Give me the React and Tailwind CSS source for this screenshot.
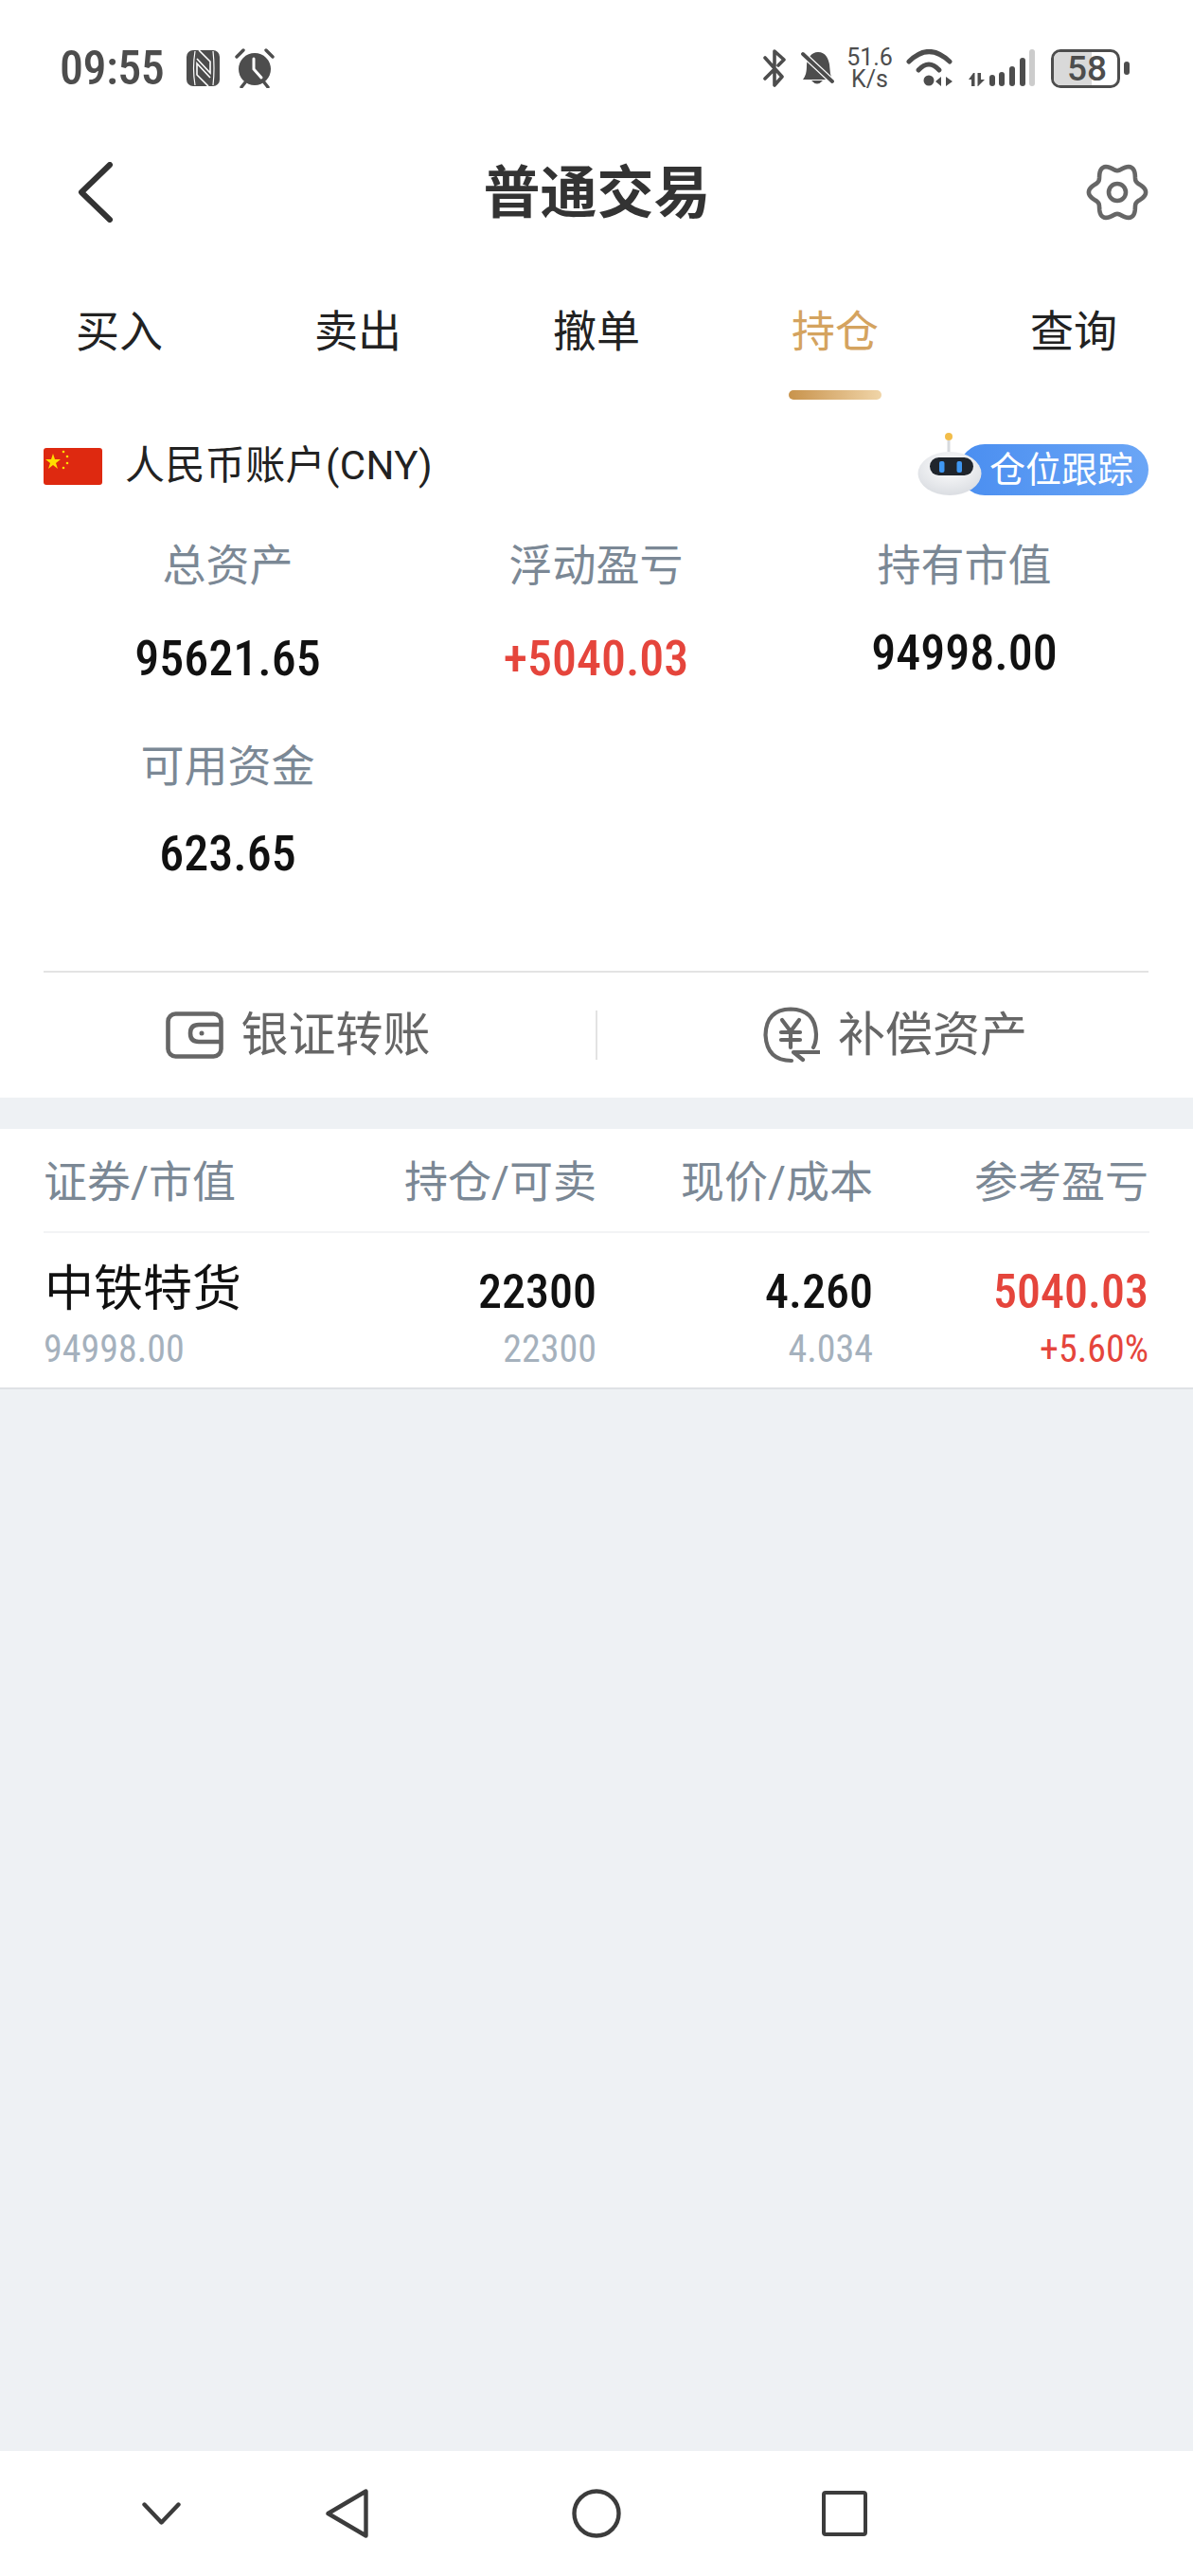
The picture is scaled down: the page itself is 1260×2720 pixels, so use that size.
import React from 'react';

const gearPath = () => {
  const pts = [];
  for (let i = 0; i < 120; i++) {
    const t = (i / 120) * Math.PI * 2;
    const r = 26.5 + 3.6 * Math.cos(6 * t);
    pts.push(`${(31 + r * Math.cos(t)).toFixed(2)} ${(31 + r * Math.sin(t)).toFixed(2)}`);
  }
  return 'M' + pts.join('L') + 'Z';
};

const tabs = ['买入', '卖出', '撤单', '持仓', '查询'];

const StatusBar = () => (
  <div className="h-[144px] flex items-center pl-[63px] pr-[67px] text-[#4d4d4d]">
    <span className="text-[50px] font-medium leading-none w-[122px] tracking-[-0.5px] [font-stretch:86%]">09:55</span>
    {/* nfc */}
    <svg width="35" height="38" viewBox="0 0 35 38" className="ml-[12px]">
      <rect width="35" height="38" rx="7" fill="#4d4d4d" />
      <path d="M9 1Q6 19 9 37M28 1Q30 19 28 37" stroke="#fff" strokeWidth="1.2" fill="none" />
      <path d="M11 9L25 24V12L13 0M25 29L11 14V26L23 38" stroke="#fff" strokeWidth="1.6" fill="none" />
    </svg>
    {/* alarm */}
    <svg width="42" height="42" viewBox="0 0 42 42" className="ml-[16px]">
      <circle cx="21" cy="22" r="17" fill="#4d4d4d" />
      <path d="M20 11V22L28 31" stroke="#fff" strokeWidth="3" fill="none" strokeLinecap="round" />
      <path d="M2 9L9 2M40 9L33 2M7 41L11 36M35 41L31 36" stroke="#4d4d4d" strokeWidth="3.4" strokeLinecap="round" />
    </svg>
    <div className="flex-1" />
    {/* bluetooth off */}
    <svg width="25" height="40" viewBox="0 0 25 40" fill="none" stroke="#4d4d4d" strokeWidth="3.6" strokeLinecap="round" strokeLinejoin="round">
      <path d="M2 9L20 29L12 38V22M12 18V2L22 11L16 17M2 31L11 22" />
    </svg>
    {/* bell off */}
    <svg width="35" height="36" viewBox="0 0 35 36" className="ml-[15px]">
      <path d="M18 1C26 1 29 8 30 14L31 24L33 30H2C5 26 6 22 6 15C6 8 11 1 18 1Z" fill="#4d4d4d" />
      <path d="M1 2L34 33" stroke="#fff" strokeWidth="6.5" />
      <path d="M2 3L33 32" stroke="#4d4d4d" strokeWidth="3.8" strokeLinecap="round" />
      <path d="M11 31Q17 38 23 31Z" fill="#4d4d4d" />
    </svg>
    <div className="ml-[13px] w-[49px] flex flex-col items-center text-[25px] leading-[23px] text-[#4d4d4d]">
      <span>51.6</span>
      <span>K/s</span>
    </div>
    {/* wifi */}
    <svg width="50" height="40" viewBox="0 0 50 40" className="ml-[14px]" fill="none" stroke="#4d4d4d" strokeWidth="5" strokeLinecap="round">
      <path d="M3 13Q24 -8 46 13" />
      <path d="M13 22Q24 10 35 22" />
      <circle cx="24" cy="33" r="5.500" fill="#4d4d4d" stroke="none" />
      <path d="M37 29V39L31 34ZM42 29V39L49 34Z" fill="#4d4d4d" stroke="none" />
    </svg>
    {/* signal */}
    <svg width="70" height="40" viewBox="0 0 70 40" className="ml-[16px]">
      <path d="M5 25L0 32H3V39H6.500V25ZM10 39L17 32H13V25H9.500V39Z" fill="#4d4d4d" />
      <rect x="22" y="27" width="6" height="12" rx="3" fill="#4d4d4d" />
      <rect x="32" y="24" width="6" height="15" rx="3" fill="#4d4d4d" />
      <rect x="43" y="18" width="6" height="21" rx="3" fill="#4d4d4d" />
      <rect x="54" y="9" width="6" height="30" rx="3" fill="#4d4d4d" />
      <rect x="64" y="0" width="6" height="39" rx="3" fill="#cccccc" />
    </svg>
    {/* battery */}
    <div className="ml-[17px] flex items-center">
      <div className="relative w-[73px] h-[41px] rounded-[10px] border-[3px] border-[#4d4d4d] overflow-hidden flex items-center">
        <div className="absolute left-0 top-0 bottom-0 w-[40px] bg-[#d9d9d9]" />
        <span className="relative ml-[14px] text-[37px] leading-none font-medium [font-stretch:90%]">58</span>
      </div>
      <div className="ml-[4px] w-[6px] h-[14px] rounded-full bg-[#4d4d4d]" />
    </div>
  </div>
);

const Header = () => (
  <div className="h-[118px] flex items-center justify-between pl-[82px] pr-[47px]">
    <svg width="38" height="64" viewBox="0 0 38 64" fill="none" stroke="#333" strokeWidth="6" strokeLinecap="round" strokeLinejoin="round">
      <path d="M34 3L4 32L34 61" />
    </svg>
    <h1 className="text-[60px] font-bold text-[#333] leading-none -ml-[6px] pt-[3px]">普通交易</h1>
    <svg width="66" height="62" viewBox="0 0 62 62" fill="none" stroke="#666" strokeWidth="4.6">
      <path d={gearPath()} />
      <circle cx="31" cy="31" r="9" />
    </svg>
  </div>
);

const Tabs = () => (
  <div className="grid grid-cols-5 h-[164px] pt-[56px]">
    {tabs.map((t, i) => (
      <div key={t} className="flex flex-col items-center">
        <span className={`text-[46px] leading-[64px] ${i === 3 ? 'text-[#d4a35f]' : 'text-[#222]'}`}>{t}</span>
        {i === 3 && <div className="mt-[30px] w-[98px] h-[10px] rounded-full bg-gradient-to-r from-[#c8934b] to-[#f0d5a8]" />}
      </div>
    ))}
  </div>
);

const Robot = () => (
  <svg width="76" height="70" viewBox="0 0 76 70" className="relative -mr-[28px] z-10">
    <defs>
      <radialGradient id="head" cx="50%" cy="35%" r="70%">
        <stop offset="0%" stopColor="#ffffff" />
        <stop offset="100%" stopColor="#d8dbe0" />
      </radialGradient>
    </defs>
    <circle cx="37" cy="6" r="4" fill="#f2bd4a" />
    <rect x="35.500" y="10" width="3" height="12" fill="#d7dade" />
    <ellipse cx="38" cy="45" rx="33.500" ry="23" fill="url(#head)" />
    <rect x="17" y="28" width="46" height="19" rx="9.500" fill="#20252c" />
    <rect x="27" y="32" width="5.500" height="12" rx="2" fill="#3f97f2" />
    <rect x="45.500" y="32" width="5.500" height="12" rx="2" fill="#3f97f2" />
  </svg>
);

const Stat = ({ label, value, valueClass = '', gapClass = 'mt-[39px]' }) => (
  <div className="flex flex-col items-center">
    <span className="text-[46px] leading-[60px] text-[#7b8895]">{label}</span>
    <span className={`${gapClass} text-[52px] leading-[60px] font-medium [font-stretch:85%] ${valueClass}`}>{value}</span>
  </div>
);

const Account = () => (
  <div className="pl-[46px] pr-[47px] bg-white">
    <div className="h-[132px] flex items-center justify-between">
      <div className="flex items-center">
        <svg width="62" height="39" viewBox="0 0 62 39">
          <rect width="62" height="39" rx="3" fill="#de2910" />
          <path d="M10 6L12 12H18L13 16L15 22L10 18L5 22L7 16L2 12H8Z" fill="#ffde00" />
          <circle cx="21" cy="4" r="1.300" fill="#ffde00" />
          <circle cx="25" cy="9" r="1.300" fill="#ffde00" />
          <circle cx="25" cy="16" r="1.300" fill="#ffde00" />
          <circle cx="21" cy="21" r="1.300" fill="#ffde00" />
        </svg>
        <span className="ml-[24px] text-[42px] leading-none text-[#222] tracking-[0.4px]">人民币账户(CNY)</span>
      </div>
      <div className="flex items-end -mt-[4px]">
        <Robot />
        <div className="w-[200px] h-[54px] mb-[2px] rounded-full bg-gradient-to-r from-[#4a8ef0] to-[#6ba6f6] flex items-center justify-end pr-[16px] text-[38px] leading-none text-white">
          仓位跟踪
        </div>
      </div>
    </div>
    <div className="grid grid-cols-3 content-start gap-y-[53px] pt-[9px] border-b-2 border-[#e3e3e3] h-[469px]">
      <Stat label="总资产" value="95621.65" valueClass="text-[#111]" />
      <Stat label="浮动盈亏" value="+5040.03" valueClass="text-[#e5453c]" />
      <Stat label="持有市值" value="94998.00" valueClass="text-[#111]" gapClass="mt-[33px]" />
      <Stat label="可用资金" value="623.65" valueClass="text-[#111]" gapClass="mt-[33px]" />
    </div>
  </div>
);

const Actions = () => (
  <div className="h-[132px] bg-white flex items-center text-[#666]">
    <div className="flex-1 flex items-center justify-center gap-[19px]">
      <svg width="61" height="50" viewBox="0 0 61 50" fill="none" stroke="#666" strokeWidth="4.6">
        <rect x="2.500" y="2.500" width="56" height="45" rx="8" />
        <path d="M58 14H35Q26 14 26 23Q26 32 35 32H58" />
        <circle cx="38" cy="23" r="2.500" fill="#666" stroke="none" />
      </svg>
      <span className="text-[50px] leading-none">银证转账</span>
    </div>
    <div className="w-[2px] h-[52px] bg-[#e3e3e3]" />
    <div className="flex-1 flex items-center justify-center gap-[19px]">
      <svg width="60" height="60" viewBox="0 0 60 60" fill="none" stroke="#666" strokeWidth="4.2" strokeLinecap="round" strokeLinejoin="round">
        <path d="M30 57Q4 57 2.500 30Q3 3 29 2.500Q55 3 56 29Q56 38 53 43" />
        <path d="M20 14L29 26L38 14M29 26V43M19 27H39M19 35H39" />
        <path d="M59 48H32L42 56" />
      </svg>
      <span className="text-[50px] leading-none">补偿资产</span>
    </div>
  </div>
);

const numMain = 'self-end text-right text-[50px] leading-[60px] font-medium [font-stretch:80%]';
const numSub = 'self-center text-right text-[40px] leading-none [font-stretch:80%]';

const Position = () => (
  <div className="mt-[33px] bg-white px-[46px] border-b-2 border-[#dfe2e5]">
    <div className="h-[110px] pt-[3px] grid grid-cols-[292px_292px_292px_291px] items-center border-b-2 border-[#f2f3f5] text-[46px] leading-none text-[#7b8895]">
      <span>证券/市值</span>
      <span className="text-right">持仓/可卖</span>
      <span className="text-right">现价/成本</span>
      <span className="text-right">参考盈亏</span>
    </div>
    <div className="h-[163px] grid grid-cols-[292px_292px_292px_291px] grid-rows-[92px_62px]">
      <span className="self-end text-[52px] leading-[60px] text-[#111] pl-[1px] pb-[2px]">中铁特货</span>
      <span className={`${numMain} text-[#111]`}>22300</span>
      <span className={`${numMain} text-[#111]`}>4.260</span>
      <span className={`${numMain} text-[#e5453c]`}>5040.03</span>
      <span className={`${numSub} !text-left text-[#a5b1bd]`}>94998.00</span>
      <span className={`${numSub} text-[#a5b1bd]`}>22300</span>
      <span className={`${numSub} text-[#a5b1bd]`}>4.034</span>
      <span className={`${numSub} text-[#e5453c]`}>+5.60%</span>
    </div>
  </div>
);

const NavBar = () => (
  <div className="h-[132px] bg-white flex items-center pl-[150px]">
    <svg width="41" height="24" viewBox="0 0 41 24" fill="none" stroke="#3c3c3c" strokeWidth="4.4" strokeLinecap="round" strokeLinejoin="round">
      <path d="M2.500 2.500L20.500 21.500L38.500 2.500" />
    </svg>
    <svg width="45" height="52" viewBox="0 0 45 52" fill="none" stroke="#3c3c3c" strokeWidth="4.4" strokeLinejoin="round" className="ml-[153px]">
      <path d="M42.500 2.500V49.500L2.500 26Z" />
    </svg>
    <svg width="52" height="52" viewBox="0 0 52 52" fill="none" stroke="#3c3c3c" strokeWidth="4.4" className="ml-[215px]">
      <circle cx="26" cy="26" r="23.500" />
    </svg>
    <div className="ml-[212px] w-[48px] h-[48px] rounded-[4px] border-[4.5px] border-[#3c3c3c]" />
  </div>
);

export default function App() {
  return (
    <div className="w-[1260px] h-[2720px] flex flex-col bg-[#eef1f4] font-['Roboto','Noto_Sans_CJK_SC',sans-serif]">
      <div className="bg-white">
        <StatusBar />
        <Header />
        <Tabs />
        <Account />
        <Actions />
      </div>
      <Position />
      <div className="flex-1" />
      <NavBar />
    </div>
  );
}
